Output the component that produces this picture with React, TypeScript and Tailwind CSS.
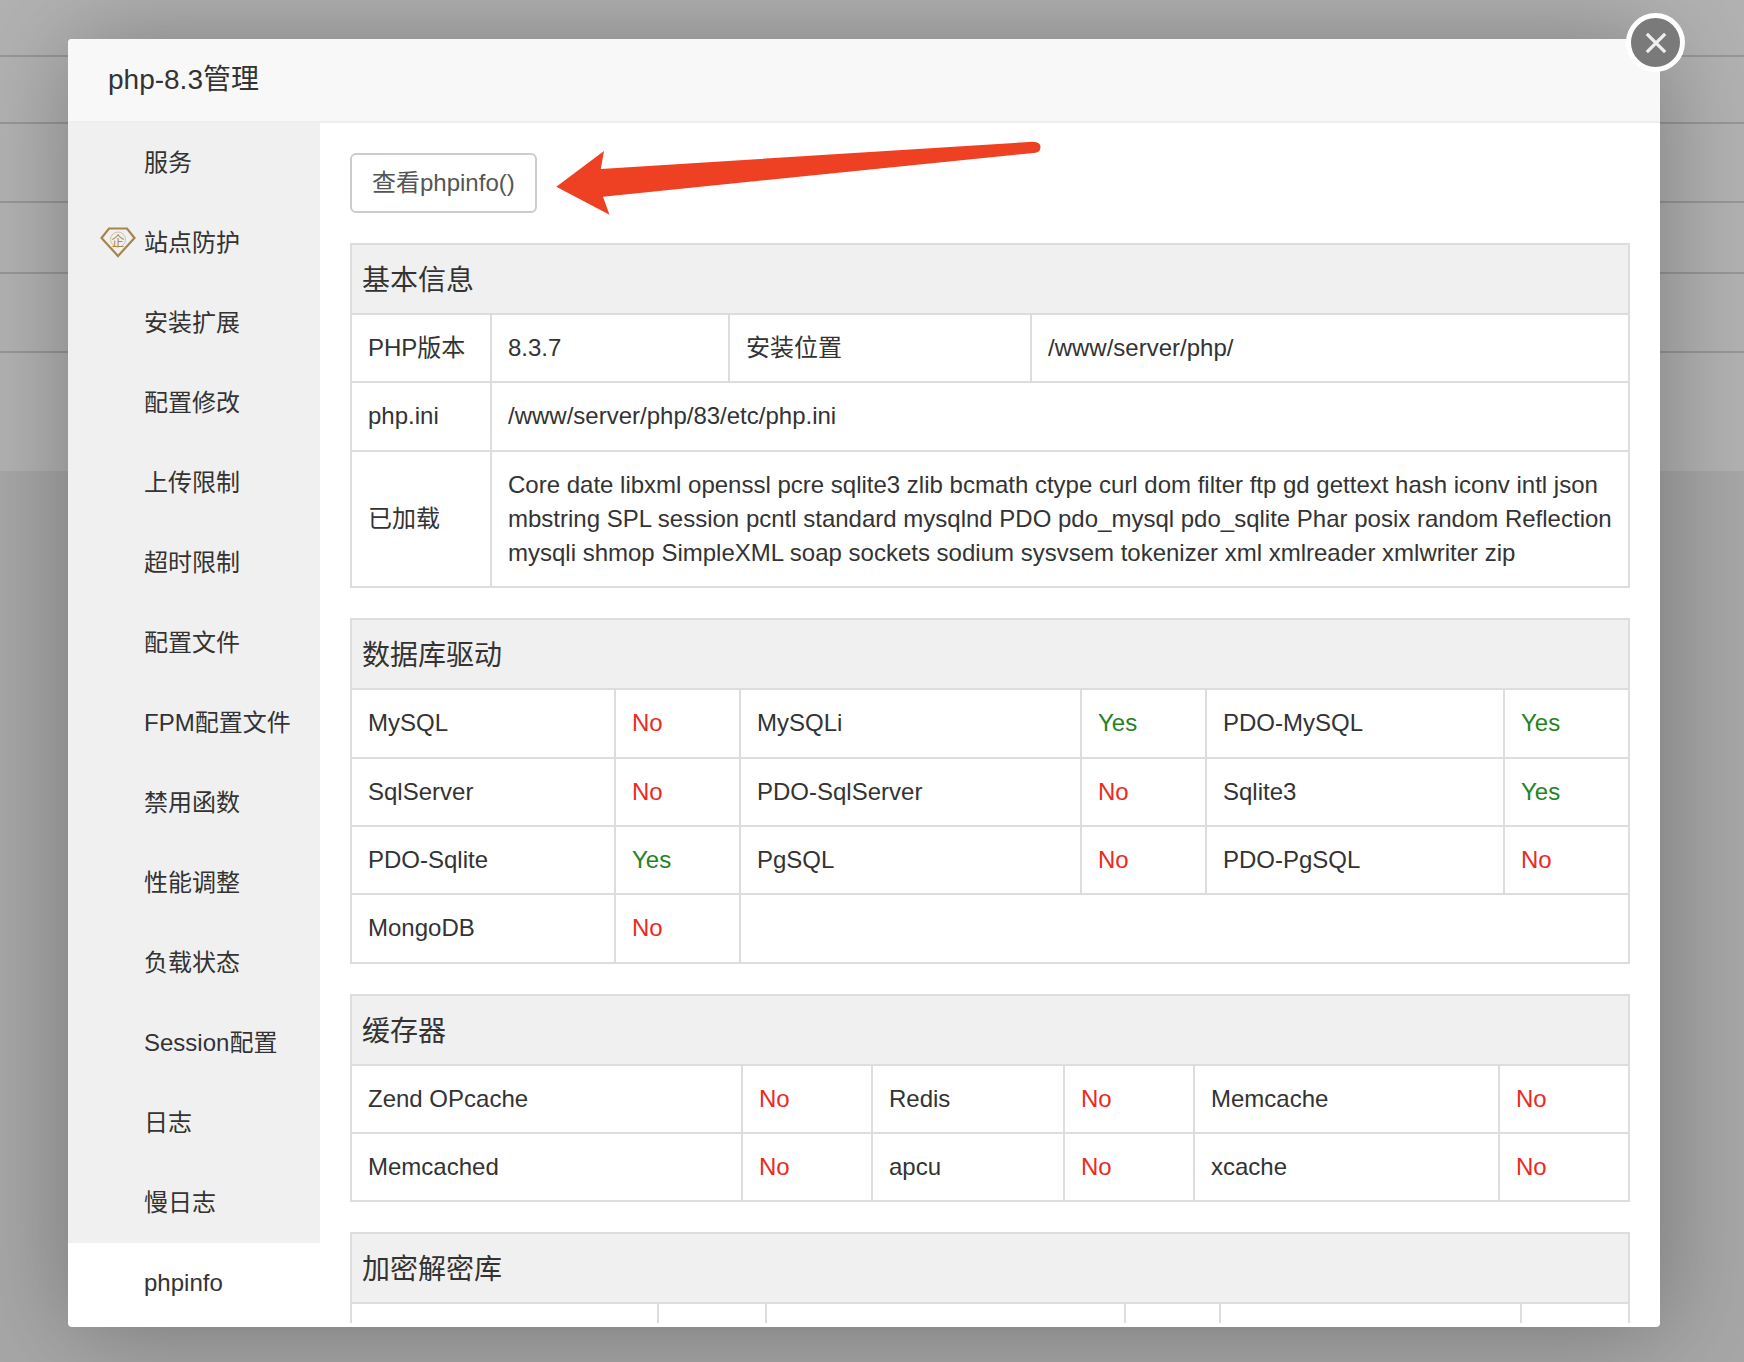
import React from "react";

const menu = ["服务", "站点防护", "安装扩展", "配置修改", "上传限制", "超时限制", "配置文件", "FPM配置文件", "禁用函数", "性能调整", "负载状态", "Session配置", "日志", "慢日志", "phpinfo"];

const cellClass = "border-2 border-[#ddd] px-4 py-4 align-middle";

function Flag({ value }: { value: string }) {
  return <span className={value === "Yes" ? "text-[#23841f]" : "text-[#ec2a1f]"}>{value}</span>;
}

function StatusRows({ rows }: { rows: string[][] }) {
  return (
    <tbody>
      {rows.map((row, index) => (
        <tr key={index}>
          {row.map((text, i) => (
            <td key={i} className={cellClass}>
              {text === "Yes" || text === "No" ? <Flag value={text} /> : text}
            </td>
          ))}
        </tr>
      ))}
    </tbody>
  );
}

function Heading({ title, span }: { title: string; span: number }) {
  return (
    <thead>
      <tr>
        <th colSpan={span} className="border-2 border-[#ddd] bg-[#f0f0f0] px-[10px] pt-4 pb-3 text-left text-[28px] leading-[40px] font-normal">
          {title}
        </th>
      </tr>
    </thead>
  );
}

function GemIcon() {
  return (
    <svg viewBox="0 0 36 31" className="absolute left-[32px] top-[24px] h-[31px] w-[36px]">
      <path d="M9 1.5H27L34.5 11L18 29L1.5 11Z" fill="none" stroke="#a5854f" strokeWidth="2.2" strokeLinejoin="miter" />
      <circle cx="18" cy="12.5" r="7.5" fill="none" stroke="#c9b48c" strokeWidth="0.8" />
      <text x="18" y="17.5" textAnchor="middle" fontSize="13" fill="#b0873f" fontFamily="'Noto Sans CJK SC', sans-serif">企</text>
    </svg>
  );
}

export default function App() {
  return (
    <div className="relative h-[1362px] w-full overflow-hidden bg-[#f0f0f0] font-['Liberation_Sans','Noto_Sans_CJK_SC',sans-serif] text-[24px] leading-[1.42857] text-[#333]">
      {/* page behind the dialog */}
      <div className="bg-white">
        <div className="h-[57px] border-b-2 border-[#d8d8d8]" />
        <div className="h-[67px] border-b-2 border-[#d8d8d8]" />
        <div className="h-[79px] border-b-2 border-[#d8d8d8]" />
        <div className="h-[71px] border-b-2 border-[#d8d8d8]" />
        <div className="h-[79px] border-b-2 border-[#d8d8d8]" />
        <div className="h-[118px]" />
      </div>
      <div className="absolute inset-0 bg-black/30" />

      <div className="absolute left-[68px] top-[39px] flex h-[1288px] w-[1592px] flex-col overflow-hidden rounded-[4px] bg-white shadow-[2px_2px_100px_rgba(0,0,0,0.3)]">
        <div className="flex h-[84px] shrink-0 items-center border-b-2 border-[#eee] bg-[#f8f8f8] pl-10 text-[28px]">php-8.3管理</div>
        <div className="flex min-h-0 flex-1">
          <div className="w-[252px] shrink-0">
            {menu.map((name) => (
              <div key={name} className={`relative flex h-20 items-center pl-[76px] ${name === "phpinfo" ? "bg-white" : "bg-[#f0f0f0]"}`}>
                {name === "站点防护" && <GemIcon />}
                {name}
              </div>
            ))}
          </div>

          <div className="h-[1200px] flex-1 overflow-hidden pl-[30px] pt-[30px]">
            <button className="mb-[30px] block h-[60px] rounded-[6px] border-2 border-[#ccc] bg-white px-5 text-[24px] text-[#555]">查看phpinfo()</button>

            <table className="mb-[30px] w-[1278px] table-fixed border-collapse">
              <colgroup>
                <col className="w-[140px]" />
                <col className="w-[238px]" />
                <col className="w-[302px]" />
                <col className="w-[598px]" />
              </colgroup>
              <Heading title="基本信息" span={4} />
              <tbody>
                <tr>
                  <td className={cellClass}>PHP版本</td>
                  <td className={cellClass}>8.3.7</td>
                  <td className={cellClass}>安装位置</td>
                  <td className={cellClass}>/www/server/php/</td>
                </tr>
                <tr>
                  <td className={cellClass}>php.ini</td>
                  <td className={cellClass} colSpan={3}>/www/server/php/83/etc/php.ini</td>
                </tr>
                <tr>
                  <td className={cellClass}>已加载</td>
                  <td className={cellClass} colSpan={3}>
                    Core date libxml openssl pcre sqlite3 zlib bcmath ctype curl dom filter ftp gd gettext hash iconv intl json mbstring SPL session pcntl standard mysqlnd PDO pdo_mysql pdo_sqlite Phar posix random Reflection mysqli shmop SimpleXML soap sockets sodium sysvsem tokenizer xml xmlreader xmlwriter zip
                  </td>
                </tr>
              </tbody>
            </table>

            <table className="mb-[30px] w-[1278px] table-fixed border-collapse">
              <colgroup>
                <col className="w-[264px]" />
                <col className="w-[125px]" />
                <col className="w-[341px]" />
                <col className="w-[125px]" />
                <col className="w-[298px]" />
                <col className="w-[125px]" />
              </colgroup>
              <Heading title="数据库驱动" span={6} />
              <StatusRows
                rows={[
                  ["MySQL", "No", "MySQLi", "Yes", "PDO-MySQL", "Yes"],
                  ["SqlServer", "No", "PDO-SqlServer", "No", "Sqlite3", "Yes"],
                  ["PDO-Sqlite", "Yes", "PgSQL", "No", "PDO-PgSQL", "No"],
                ]}
              />
              <tbody>
                <tr>
                  <td className={cellClass}>MongoDB</td>
                  <td className={cellClass}><Flag value="No" /></td>
                  <td className={cellClass} colSpan={4} />
                </tr>
              </tbody>
            </table>

            <table className="mb-[30px] w-[1278px] table-fixed border-collapse">
              <colgroup>
                <col className="w-[391px]" />
                <col className="w-[130px]" />
                <col className="w-[192px]" />
                <col className="w-[130px]" />
                <col className="w-[305px]" />
                <col className="w-[130px]" />
              </colgroup>
              <Heading title="缓存器" span={6} />
              <StatusRows
                rows={[
                  ["Zend OPcache", "No", "Redis", "No", "Memcache", "No"],
                  ["Memcached", "No", "apcu", "No", "xcache", "No"],
                ]}
              />
            </table>

            <table className="w-[1278px] table-fixed border-collapse">
              <colgroup>
                <col className="w-[307px]" />
                <col className="w-[108px]" />
                <col className="w-[359px]" />
                <col className="w-[95px]" />
                <col className="w-[301px]" />
                <col className="w-[108px]" />
              </colgroup>
              <Heading title="加密解密库" span={6} />
              <StatusRows rows={[["\u00a0", "\u00a0", "\u00a0", "\u00a0", "\u00a0", "\u00a0"]]} />
            </table>
          </div>
        </div>
      </div>

      {/* annotation arrow drawn on the screenshot */}
      <svg viewBox="550 135 495 85" className="absolute left-[550px] top-[135px] h-[85px] w-[495px]">
        <path d="M556.3 186.7L604 151L600.8 169L1033 141.7Q1040.5 142 1040.5 147Q1040.5 152 1035.7 152.7L603 196.7L609.5 214.7Z" fill="#ee4023" />
      </svg>

      {/* close button */}
      <div className="absolute left-[1626px] top-[13px] flex h-[59px] w-[59px] items-center justify-center rounded-full border-[5px] border-white bg-[#7a7a7a]">
        <svg viewBox="0 0 24 24" className="h-[22px] w-[22px]" fill="none" stroke="#eeeeee" strokeWidth="3.6">
          <path d="M2 2L22 22M22 2L2 22" />
        </svg>
      </div>
    </div>
  );
}
